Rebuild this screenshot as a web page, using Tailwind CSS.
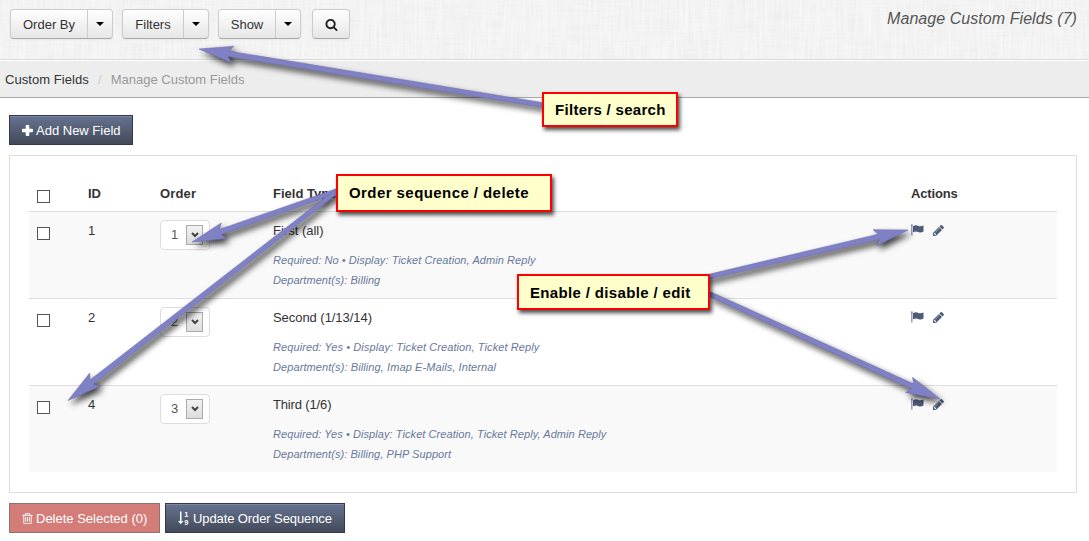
<!DOCTYPE html>
<html lang="en">
<head>
<meta charset="utf-8">
<title>Manage Custom Fields</title>
<script src="https://cdn.jsdelivr.net/npm/@tailwindcss/browser@4"></script>
</head>
<body class="relative h-[541px] w-[1089px] overflow-hidden bg-white font-['Liberation_Sans',Arial,sans-serif] text-[13px] leading-5 text-[#333]">
<svg class="hidden">
  <defs>
    <symbol id="search" viewBox="0 0 1792 1792"><path d="M1216 832q0-185-131.500-316.500t-316.500-131.500-316.500 131.500-131.500 316.500 131.500 316.500 316.500 131.500 316.500-131.500 131.500-316.500zm512 832q0 52-38 90t-90 38q-54 0-90-38l-343-342q-179 124-399 124-143 0-273.500-55.500t-225-150-150-225-55.500-273.500 55.500-273.500 150-225 225-150 273.500-55.500 273.500 55.500 225 150 150 225 55.500 273.500q0 220-124 399l343 343q37 37 37 90z"/></symbol>
    <symbol id="plus" viewBox="0 0 11 11"><path d="M4.700 0h1.600q1 0 1 1v2.700h2.700q1 0 1 1v1.600q0 1-1 1h-2.700v2.700q0 1-1 1h-1.600q-1 0-1-1v-2.700h-2.700q-1 0-1-1v-1.600q0-1 1-1h2.700v-2.700q0-1 1-1z"/></symbol>
    <symbol id="pencil" viewBox="0 0 1792 1792"><path d="M491 1536l91-91-235-235-91 91v107h128v128h107zm523-928q0-22-22-22-10 0-17 7l-542 542q-7 7-7 17 0 22 22 22 10 0 17-7l542-542q7-7 7-17zm-54-192l416 416-832 832h-416v-416zm683 96q0 53-37 90l-166 166-416-416 166-165q36-38 90-38 53 0 91 38l235 234q37 39 37 91z"/></symbol>
    <symbol id="flag" viewBox="0 0 13 12"><path fill="#7d74ad" d="M.3 1h1.100v10.500h-1.100z"/><path d="M0 .4h1.700v1.400h-1.700z" fill="#7d74ad"/><path d="M2 2.200Q4.700.6 7 1.800T12.500 1.500V7.600Q9.700 9.200 7.300 8T2 8.300z"/></symbol>
    <symbol id="trash" viewBox="0 0 1792 1792"><path d="M704 736v576q0 14-9 23t-23 9h-64q-14 0-23-9t-9-23v-576q0-14 9-23t23-9h64q14 0 23 9t9 23zm256 0v576q0 14-9 23t-23 9h-64q-14 0-23-9t-9-23v-576q0-14 9-23t23-9h64q14 0 23 9t9 23zm256 0v576q0 14-9 23t-23 9h-64q-14 0-23-9t-9-23v-576q0-14 9-23t23-9h64q14 0 23 9t9 23zm128 724v-948h-896v948q0 22 7 40.500t14.500 27 10.500 8.500h832q3 0 10.500-8.500t14.500-27 7-40.500zm-672-1076h448l-48-117q-7-9-17-11h-317q-10 2-17 11zm928 32v64q0 14-9 23t-23 9h-96v948q0 83-47 143.500t-113 60.500h-832q-66 0-113-58.500t-47-141.500v-952h-96q-14 0-23-9t-9-23v-64q0-14 9-23t23-9h309l70-167q15-37 54-63t79-26h320q40 0 79 26t54 63l70 167h309q14 0 23 9t9 23z"/></symbol>
    <symbol id="chevron" viewBox="0 0 8 6"><path d="M1 1l3 3 3-3" fill="none" stroke="#444" stroke-width="2"/></symbol>
    <filter id="weft" x="0" y="0" width="100%" height="100%"><feTurbulence type="fractalNoise" baseFrequency="0.025 0.4" numOctaves="3" seed="4"/><feColorMatrix values="0 0 0 0 0.8  0 0 0 0 0.8  0 0 0 0 0.8  0.6 0 0 0 -0.22"/></filter>
    <filter id="warp" x="0" y="0" width="100%" height="100%"><feTurbulence type="fractalNoise" baseFrequency="0.35 0.025" numOctaves="3" seed="9"/><feColorMatrix values="0 0 0 0 1  0 0 0 0 1  0 0 0 0 1  1.400 0 0 0 -0.4"/></filter>
  </defs>
</svg>

<header class="relative flex h-[60px] items-start justify-between border-b border-[#d9d9d9] bg-[#f2f2f2] pt-[9px] pr-3 pl-[10px]">
  <svg class="absolute inset-0 h-full w-full opacity-55" aria-hidden="true"><rect width="100%" height="100%" filter="url(#weft)"/><rect width="100%" height="100%" filter="url(#warp)"/></svg>
  <div class="relative flex h-[30px]">
    <div class="mr-[9px] flex w-[103px] rounded border border-[#ccc] border-b-[#aaa] bg-linear-to-b from-white to-[#e6e6e6] shadow-xs">
      <span class="flex w-[77px] items-center justify-center border-r border-[#ccc] pt-0.5">Order By</span>
      <span class="flex grow items-center justify-center"><svg class="h-1 w-2" viewBox="0 0 8 4"><path d="M0 0h8l-4 4z"/></svg></span>
    </div>
    <div class="mr-[9px] flex w-[87px] rounded border border-[#ccc] border-b-[#aaa] bg-linear-to-b from-white to-[#e6e6e6] shadow-xs">
      <span class="flex w-[61px] items-center justify-center border-r border-[#ccc] pt-0.5">Filters</span>
      <span class="flex grow items-center justify-center"><svg class="h-1 w-2" viewBox="0 0 8 4"><path d="M0 0h8l-4 4z"/></svg></span>
    </div>
    <div class="mr-[11px] flex w-[83px] rounded border border-[#ccc] border-b-[#aaa] bg-linear-to-b from-white to-[#e6e6e6] shadow-xs">
      <span class="flex w-[57px] items-center justify-center border-r border-[#ccc] pt-0.5">Show</span>
      <span class="flex grow items-center justify-center"><svg class="h-1 w-2" viewBox="0 0 8 4"><path d="M0 0h8l-4 4z"/></svg></span>
    </div>
    <div class="flex w-[38px] items-center justify-center rounded border border-[#ccc] border-b-[#aaa] bg-linear-to-b from-white to-[#e6e6e6] shadow-xs">
      <svg class="size-[13px] fill-[#222]"><use href="#search"/></svg>
    </div>
  </div>
  <h1 class="relative text-base leading-5 tracking-[0.06px] text-[#555] italic">Manage Custom Fields (7)</h1>
</header>

<nav class="flex h-[38px] items-center border-t border-b border-t-white border-b-[#a9a9a9] bg-[#ededed] pt-0.5 pl-[5px]">
  <span class="tracking-[0.05px]">Custom Fields</span><span class="w-[22px] text-center text-[#ccc]">/</span><span class="text-[#999]">Manage Custom Fields</span>
</nav>

<main class="px-[9px] pt-[17px]">
  <div class="flex h-[30px] w-[124px] items-center border border-[#31394a] bg-linear-to-b from-[#667391] to-[#434a5a] pl-3 text-white shadow-[inset_0_1px_0_#7b88a5]">
    <svg class="mr-[3px] size-[11px] fill-white"><use href="#plus"/></svg><span class="pt-0.5">Add New Field</span>
  </div>

  <section class="mt-[10px] h-[338px] w-[1068px] border border-[#ddd] px-[19px] pt-[19px]">
    <div class="grid h-9 grid-cols-[51px_72px_113px_638px_1fr] pt-[9px] pl-2 font-bold">
      <span class="mt-[6px] size-[13px] border border-[#555] bg-white"></span><span>ID</span><span class="tracking-[0.15px]">Order</span><span>Field Type</span><span class="tracking-[-0.15px]">Actions</span>
    </div>
    <div class="grid h-[87px] grid-cols-[51px_72px_113px_638px_1fr] border-t border-[#ddd] bg-[#f9f9f9] pt-[9px] pl-2">
      <span class="mt-[6px] size-[13px] border border-[#555] bg-white"></span><span>1</span>
      <span class="-mt-px flex h-[30px] w-[50px] items-center rounded border border-[#ddd] bg-white pl-[10px] text-[#555]"><span class="w-[15px]">1</span><span class="flex h-5 w-[17px] items-center justify-center border border-[#aaa] bg-linear-to-b from-[#f2f2f2] to-[#ddd]"><svg class="h-[6px] w-2"><use href="#chevron"/></svg></span></span>
      <div><p>First (all)</p><div class="mt-[9px] text-[11px] tracking-[0.07px] text-[#68789b] italic"><p>Required: No • Display: Ticket Creation, Admin Reply</p><p>Department(s): Billing</p></div></div>
      <div class="flex pt-[3px] fill-[#4d5b78]"><svg class="mr-2 h-3 w-[13px]"><use href="#flag"/></svg><svg class="size-[13px]"><use href="#pencil"/></svg></div>
    </div>
    <div class="grid h-[87px] grid-cols-[51px_72px_113px_638px_1fr] border-t border-[#ddd] pt-[9px] pl-2">
      <span class="mt-[6px] size-[13px] border border-[#555] bg-white"></span><span>2</span>
      <span class="-mt-px flex h-[30px] w-[50px] items-center rounded border border-[#ddd] bg-white pl-[10px] text-[#555]"><span class="w-[15px]">2</span><span class="flex h-5 w-[17px] items-center justify-center border border-[#aaa] bg-linear-to-b from-[#f2f2f2] to-[#ddd]"><svg class="h-[6px] w-2"><use href="#chevron"/></svg></span></span>
      <div><p class="tracking-[-0.05px]">Second (1/13/14)</p><div class="mt-[9px] text-[11px] tracking-[0.09px] text-[#68789b] italic"><p>Required: Yes • Display: Ticket Creation, Ticket Reply</p><p>Department(s): Billing, Imap E-Mails, Internal</p></div></div>
      <div class="flex pt-[3px] fill-[#4d5b78]"><svg class="mr-2 h-3 w-[13px]"><use href="#flag"/></svg><svg class="size-[13px]"><use href="#pencil"/></svg></div>
    </div>
    <div class="grid h-[87px] grid-cols-[51px_72px_113px_638px_1fr] border-t border-[#ddd] bg-[#f9f9f9] pt-[9px] pl-2">
      <span class="mt-[6px] size-[13px] border border-[#555] bg-white"></span><span>4</span>
      <span class="-mt-px flex h-[30px] w-[50px] items-center rounded border border-[#ddd] bg-white pl-[10px] text-[#555]"><span class="w-[15px]">3</span><span class="flex h-5 w-[17px] items-center justify-center border border-[#aaa] bg-linear-to-b from-[#f2f2f2] to-[#ddd]"><svg class="h-[6px] w-2"><use href="#chevron"/></svg></span></span>
      <div><p class="tracking-[-0.15px]">Third (1/6)</p><div class="mt-[9px] text-[11px] tracking-[0.07px] text-[#68789b] italic"><p>Required: Yes • Display: Ticket Creation, Ticket Reply, Admin Reply</p><p>Department(s): Billing, PHP Support</p></div></div>
      <div class="flex pt-[3px] fill-[#4d5b78]"><svg class="mr-2 h-3 w-[13px]"><use href="#flag"/></svg><svg class="size-[13px]"><use href="#pencil"/></svg></div>
    </div>
  </section>

  <div class="mt-[10px] flex gap-[5px] text-white">
    <div class="flex h-[30px] w-[151px] items-center border border-[#8a7576] bg-[#d47c78] pl-[11px]">
      <svg class="mr-[2px] size-[13px] fill-white"><use href="#trash"/></svg><span class="pt-0.5">Delete Selected (0)</span>
    </div>
    <div class="flex h-[30px] w-[180px] items-center border border-[#31394a] bg-linear-to-b from-[#667391] to-[#434a5a] pl-3 shadow-[inset_0_1px_0_#7b88a5]">
      <svg class="mr-[3px] h-[14px] w-3 fill-white" viewBox="0 0 12 14"><path d="M2 .5h1.500v9.500h2l-2.750 3.300L0 10h2z"/><text x="6.300" y="6" font-size="7.500" font-weight="bold">1</text><text x="6.300" y="13.500" font-size="7.500" font-weight="bold">9</text></svg><span class="pt-0.5 tracking-[-0.1px]">Update Order Sequence</span>
    </div>
  </div>
</main>

<!-- Annotation arrows and callouts -->
<svg class="absolute inset-0 h-[541px] w-[1089px] fill-[#8080c4] stroke-[#6c6cae] stroke-[0.5] drop-shadow-[3px_4px_3px_rgba(0,0,0,0.75)]" viewBox="0 0 1089 541">
  <path transform="translate(199 49) rotate(9.250)" d="M0 0L34-8.300L30-2.700L348-2.300V2.300L30 2.700L34 8.300z"/>
  <path transform="translate(192 242) rotate(-19.400)" d="M0 0L34-8.300L30-2.700L154-2.300V2.300L30 2.700L34 8.300z"/>
  <path transform="translate(68 400.500) rotate(-37.900)" d="M0 0L34-8.300L30-2.700L341-2.300V2.300L30 2.700L34 8.300z"/>
  <path transform="translate(908 230) rotate(166.800)" d="M0 0L34-8.300L30-2.700L207-2.300V2.300L30 2.700L34 8.300z"/>
  <path transform="translate(940 399) rotate(204.500)" d="M0 0L34-8.300L30-2.700L253-2.300V2.300L30 2.700L34 8.300z"/>
</svg>
<div class="absolute top-[92px] left-[542px] flex h-[35px] w-[136px] items-center border-2 border-[#f00] bg-[#ffc] pt-px pl-[11px] text-[15px] font-bold tracking-[0.3px] text-black shadow-[2px_3px_4px_rgba(0,0,0,0.7)]"><span>Filters / search</span></div>
<div class="absolute top-[174px] left-[336px] flex h-[38px] w-[216px] items-center border-2 border-[#f00] bg-[#ffc] pl-[11px] text-[15px] font-bold tracking-[0.43px] text-black shadow-[2px_3px_4px_rgba(0,0,0,0.7)]"><span>Order sequence / delete</span></div>
<div class="absolute top-[274px] left-[517px] flex h-9 w-[193px] items-center border-2 border-[#f00] bg-[#ffc] pt-0.5 pl-[11px] text-[15px] font-bold tracking-[0.35px] text-black shadow-[2px_3px_4px_rgba(0,0,0,0.7)]"><span>Enable / disable / edit</span></div>
</body>
</html>
